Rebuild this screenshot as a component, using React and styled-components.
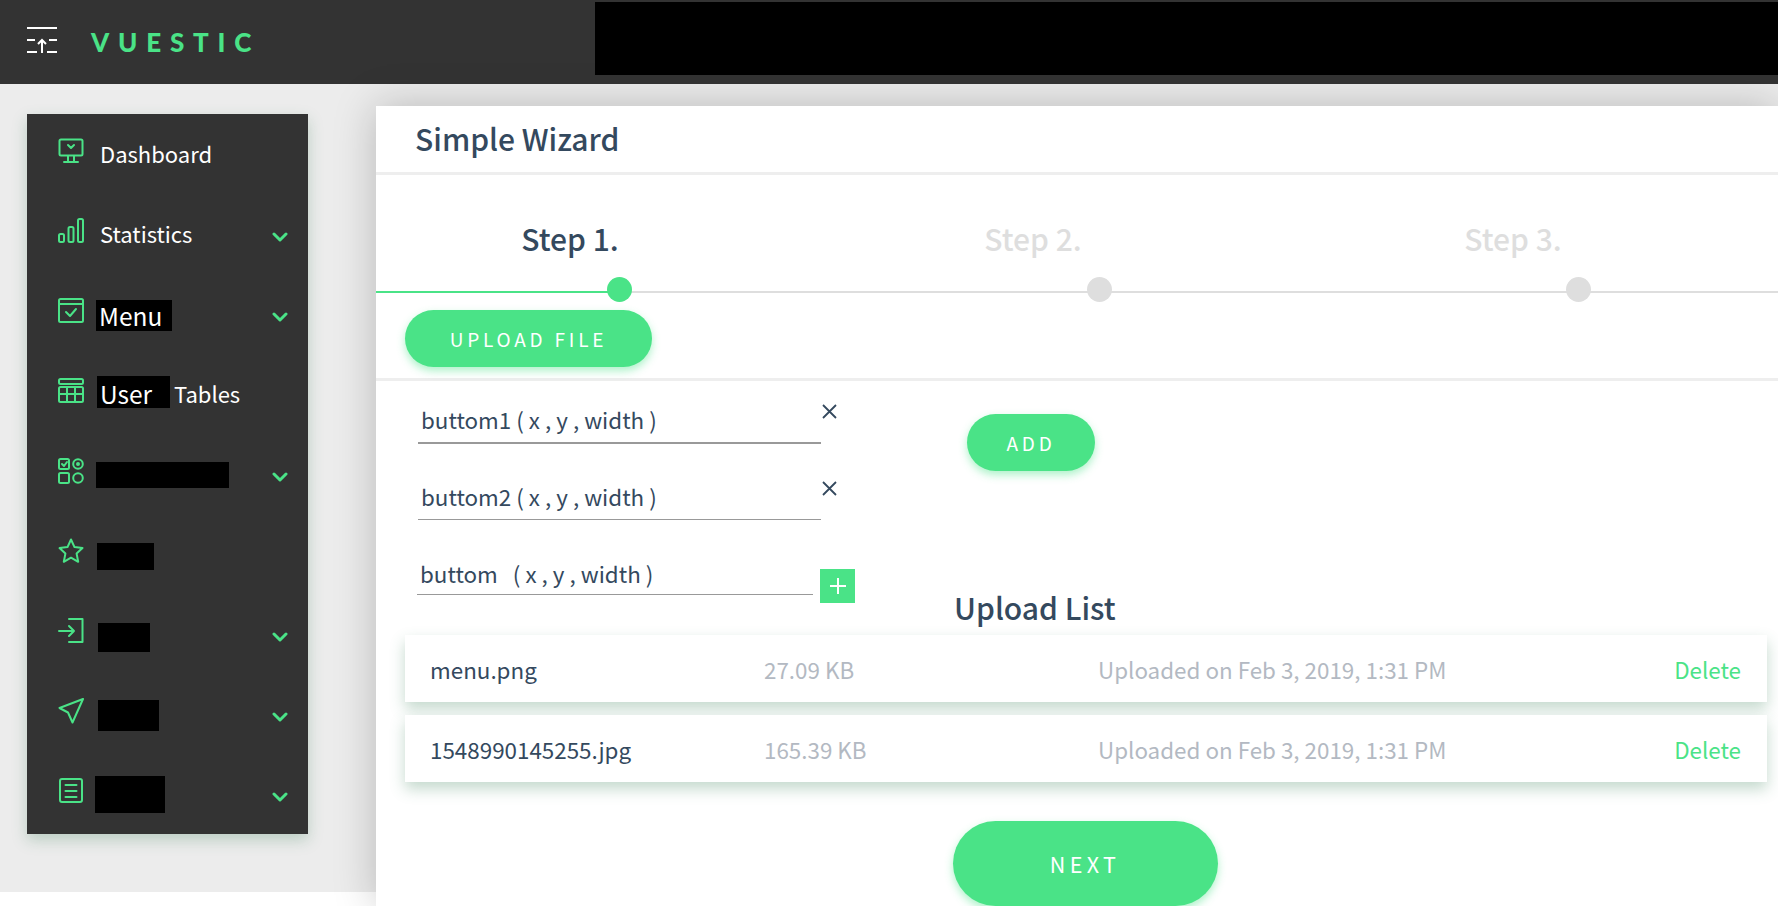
import React from 'react'
import styled, { createGlobalStyle } from 'styled-components'

const green = '#4ae387'
const ink = '#34495e'
const font = '"Noto Sans CJK SC", "Noto Sans", sans-serif'

const GlobalStyle = createGlobalStyle`
  html, body {
    margin: 0;
    padding: 0;
    background: #fff;
    font-family: ${font};
    overflow: hidden;
  }
  * {
    box-sizing: border-box;
  }
`

const Page = styled.div`
  width: 1778px;
  height: 906px;
  overflow: hidden;
  background: #fff;
`

const Header = styled.header`
  height: 84px;
  background: #333;
  display: flex;
  align-items: flex-start;
`

const Brand = styled.div`
  width: 595px;
  height: 84px;
  flex: none;
  padding: 27px 0 0 27px;
  display: flex;
  align-items: flex-start;
  gap: 34px;
`

const Logo = styled.span`
  font-family: "Lato", "Noto Sans", sans-serif;
  font-weight: 900;
  font-size: 26px;
  line-height: 30px;
  letter-spacing: 8.8px;
  color: ${green};
`

const Redaction = styled.div`
  flex: 1;
  height: 73px;
  margin-top: 2px;
  background: #000;
`

const Body = styled.div`
  display: flex;
  height: 808px;
  align-items: flex-start;
  background: #ececec;
`

const Sidebar = styled.nav`
  width: 281px;
  height: 720px;
  flex: none;
  margin: 30px 0 0 27px;
  background: #333;
  box-shadow: 0 6px 14px rgba(60, 130, 90, 0.28);
  padding: 0 20px 0 31px;
`

const NavItem = styled.div`
  height: 80px;
  display: flex;
  align-items: center;
  color: #fff;
  font-size: 22px;
`

const NavIcon = styled.span`
  width: 26px;
  height: 26px;
  flex: none;
  margin-top: -6px;
  display: flex;
`

const NavLabel = styled.span`
  margin-left: ${({ $ml = 16 }) => $ml}px;
  margin-top: -2px;
  line-height: 30px;
`

const Mask = styled.span`
  background: #000;
  color: #fff;
  display: inline-flex;
  align-items: ${({ $up }) => ($up ? 'flex-end' : 'center')};
  flex: none;
  width: ${({ $w }) => $w}px;
  height: ${({ $h }) => $h}px;
  margin-left: ${({ $ml }) => $ml}px;
  margin-top: ${({ $dy = 0 }) => $dy * 2}px;
  padding-left: 3px;
  font-size: 24.5px;
  line-height: 28px;
`

const Chevron = styled.span`
  margin-left: auto;
  margin-top: 6px;
  width: 16px;
  height: 12px;
  display: flex;
`

const Content = styled.main`
  flex: 1;
  margin: 22px 0 0 68px;
  height: 800px;
  background: #fff;
  box-shadow: 0 0 40px rgba(0, 0, 0, 0.22);
  color: ${ink};
`

const CardTitle = styled.div`
  height: 69px;
  border-bottom: 3px solid #eee;
  padding: 0 0 0 39px;
  font-size: 30px;
  font-weight: 500;
  line-height: 64px;
`

const Steps = styled.div`
  height: 117px;
  position: relative;
`

const StepTitle = styled.div`
  position: absolute;
  top: 40px;
  left: ${({ $x }) => $x}px;
  transform: translateX(-50%);
  font-size: 30px;
  font-weight: 500;
  line-height: 46px;
  color: ${({ $active }) => ($active ? ink : '#dedede')};
`

const Track = styled.div`
  position: absolute;
  left: 0;
  right: 0;
  top: 116px;
  height: 2px;
  background: linear-gradient(to right, ${green} 244px, #dedede 244px);
`

const Dot = styled.span`
  position: absolute;
  top: 102px;
  left: ${({ $x }) => $x}px;
  width: 25px;
  height: 25px;
  border-radius: 50%;
  background: ${({ $active }) => ($active ? green : '#dedede')};
`

const UploadRow = styled.div`
  height: 89px;
  padding: 18px 0 0 29px;
  border-bottom: 3px solid #eee;
`

const PillButton = styled.button`
  display: block;
  border: 0;
  padding: 0;
  width: ${({ $w }) => $w}px;
  height: ${({ $h }) => $h}px;
  border-radius: ${({ $h }) => $h / 2}px;
  background: ${green};
  color: #fff;
  font-family: ${font};
  font-size: ${({ $fs = 19 }) => $fs}px;
  letter-spacing: ${({ $ls = 3.8 }) => $ls}px;
  box-shadow: 0 4px 9px rgba(74, 227, 135, 0.45);
`

const Fields = styled.div`
  display: flex;
  height: 254px;
`

const FieldColumn = styled.div`
  width: 581px;
  flex: none;
  padding: 0 0 0 42px;
`

const FieldRow = styled.div`
  display: flex;
  align-items: flex-start;
  height: ${({ $h = 77 }) => $h}px;
`

const FieldText = styled.div`
  width: ${({ $w = 403 }) => $w}px;
  height: ${({ $h }) => $h}px;
  margin-left: ${({ $ml = 0 }) => $ml}px;
  border-bottom: ${({ $b = 1 }) => $b}px solid #999;
  font-size: 22.4px;
  line-height: 32px;
  padding: 22px 0 0 3px;
  white-space: pre;
`

const RemoveButton = styled.span`
  margin: 23px 0 0 1px;
  width: 15px;
  height: 15px;
  display: flex;
`

const AddField = styled.span`
  width: 35px;
  height: 34px;
  margin: 34px 0 0 7px;
  background: ${green};
  display: flex;
  align-items: center;
  justify-content: center;
`

const AddColumn = styled.div`
  padding: 33px 0 0 0;
  margin-left: 10px;
`

const ListTitle = styled.div`
  margin: 113px 0 0 -13px;
  font-size: 30px;
  font-weight: 500;
  line-height: 46px;
`

const UploadList = styled.div`
  margin: 0 11px 0 29px;
  display: grid;
  gap: 13px;
`

const FileRow = styled.div`
  height: 67px;
  background: #fff;
  box-shadow: 0 7px 14px rgba(60, 130, 90, 0.3);
  display: grid;
  grid-template-columns: 334px 334px 1fr auto;
  align-items: center;
  padding: 0 26px 0 25px;
  font-size: 22.4px;
  position: relative;
`

const Muted = styled.span`
  color: #b3b9c2;
`

const DeleteLink = styled.span`
  color: ${green};
`

const NextRow = styled.div`
  display: flex;
  justify-content: center;
  margin: 39px 0 0 0;
  padding-left: 16px;
`

const iconProps = {
  viewBox: '0 0 26 26',
  width: 26,
  height: 26,
  fill: 'none',
  stroke: green,
  strokeWidth: 2,
  strokeLinecap: 'round',
  strokeLinejoin: 'round',
}

const icons = {
  dashboard: (
    <svg {...iconProps}>
      <rect x="1.5" y="1.5" width="23" height="16" rx="1.5" />
      <path d="M10 7l3 3 3-3M10 18v5M16 18v5M6 24h14" />
    </svg>
  ),
  stats: (
    <svg {...iconProps}>
      <rect x="1" y="16" width="5" height="8" rx="1.5" />
      <rect x="10.5" y="9" width="5" height="15" rx="1.5" />
      <rect x="20" y="1" width="5" height="23" rx="1.5" />
    </svg>
  ),
  menu: (
    <svg {...iconProps}>
      <rect x="1" y="1" width="24" height="23" rx="1.5" />
      <path d="M1 6h24M8 14l4 4 6-7" />
    </svg>
  ),
  table: (
    <svg {...iconProps}>
      <rect x="1" y="1" width="24" height="5" rx="1.5" />
      <rect x="1" y="9" width="24" height="15" rx="1.5" />
      <path d="M1 16h24M9 9v15M17 9v15" />
    </svg>
  ),
  ui: (
    <svg {...iconProps}>
      <rect x="1" y="1" width="10" height="10" rx="1.5" />
      <rect x="1" y="15" width="10" height="10" rx="1.5" />
      <circle cx="20" cy="6" r="4.8" />
      <circle cx="20" cy="6" r="1" />
      <circle cx="20" cy="20" r="4.8" />
      <path d="M4 6l2 2 3-4" />
    </svg>
  ),
  star: (
    <svg {...iconProps}>
      <path d="M13 1.500l3.500 7.600 8 1-5.900 5.500 1.600 8.200-7.200-4.100-7.200 4.100 1.600-8.200L1.500 10.100l8-1z" />
    </svg>
  ),
  login: (
    <svg {...iconProps}>
      <path d="M11 1h13.500v23H11M1 13h15M11 8l5 5-5 5" />
    </svg>
  ),
  nav: (
    <svg {...iconProps}>
      <path d="M25 1L1.500 10l8.500 4.500 4.500 10z" />
    </svg>
  ),
  doc: (
    <svg {...iconProps}>
      <rect x="2" y="1" width="22" height="23" rx="2" />
      <path d="M7.500 7h11M7.500 13h11M7.500 19h11" />
    </svg>
  ),
}

const navItems = [
  { icon: 'dashboard', label: 'Dashboard' },
  { icon: 'stats', label: 'Statistics', more: true },
  { icon: 'menu', mask: { w: 76, h: 31, text: 'Menu', ml: 12, dy: 1.5 }, more: true },
  { icon: 'table', mask: { w: 73, h: 32, text: 'User', ml: 13, dy: -2, up: true }, after: 'Tables' },
  { icon: 'ui', mask: { w: 133, h: 26, ml: 12, dy: 1 }, more: true },
  { icon: 'star', mask: { w: 57, h: 27, ml: 13, dy: 2.5 } },
  { icon: 'login', mask: { w: 52, h: 29, ml: 14, dy: 3.5 }, more: true },
  { icon: 'nav', mask: { w: 61, h: 31, ml: 14, dy: 1.5 }, more: true },
  { icon: 'doc', mask: { w: 70, h: 37, ml: 11, dy: 0.5 }, more: true },
]

const files = [
  { name: 'menu.png', size: '27.09 KB' },
  { name: '1548990145255.jpg', size: '165.39 KB' },
]

const ChevronIcon = () => (
  <Chevron>
    <svg width="16" height="12" viewBox="0 0 16 12" fill="none" stroke={green} strokeWidth="3" strokeLinecap="round" strokeLinejoin="round">
      <path d="M2 3l6 6 6-6" />
    </svg>
  </Chevron>
)

const Cross = () => (
  <svg width="15" height="15" viewBox="0 0 15 15" fill="none" stroke={ink} strokeWidth="1.8">
    <path d="M1 1l13 13M14 1L1 14" />
  </svg>
)

export default function App() {
  return (
    <Page>
      <GlobalStyle />
      <Header>
        <Brand>
          <svg width="30" height="26" viewBox="0 0 30 26" fill="none" stroke="#fff" strokeWidth="2">
            <path d="M0 1h30M0 13h8M22 13h8M0 25h10M20 25h10M15 26V13M11 17l4-4 4 4" />
          </svg>
          <Logo>VUESTIC</Logo>
        </Brand>
        <Redaction />
      </Header>
      <Body>
        <Sidebar>
          {navItems.map(item => (
            <NavItem key={item.icon}>
              <NavIcon>{icons[item.icon]}</NavIcon>
              {item.label && <NavLabel>{item.label}</NavLabel>}
              {item.mask && (
                <Mask
                  $w={item.mask.w}
                  $h={item.mask.h}
                  $ml={item.mask.ml}
                  $dy={item.mask.dy}
                  $up={item.mask.up}
                >
                  {item.mask.text}
                </Mask>
              )}
              {item.after && <NavLabel $ml={4}>{item.after}</NavLabel>}
              {item.more && <ChevronIcon />}
            </NavItem>
          ))}
        </Sidebar>
        <Content>
          <CardTitle>Simple Wizard</CardTitle>
          <Steps>
            <StepTitle $x={194} $active>Step 1.</StepTitle>
            <StepTitle $x={657}>Step 2.</StepTitle>
            <StepTitle $x={1137}>Step 3.</StepTitle>
            <Track />
            <Dot $x={231} $active />
            <Dot $x={711} />
            <Dot $x={1190} />
          </Steps>
          <UploadRow>
            <PillButton $w={247} $h={57}>UPLOAD FILE</PillButton>
          </UploadRow>
          <Fields>
            <FieldColumn>
              <FieldRow>
                <FieldText $h={63} $b={2}>buttom1 ( x , y , width )</FieldText>
                <RemoveButton><Cross /></RemoveButton>
              </FieldRow>
              <FieldRow>
                <FieldText $h={62}>buttom2 ( x , y , width )</FieldText>
                <RemoveButton><Cross /></RemoveButton>
              </FieldRow>
              <FieldRow $h={70}>
                <FieldText $w={396} $ml={-1} $h={60}>buttom   ( x , y , width )</FieldText>
                <AddField>
                  <svg width="16" height="16" viewBox="0 0 16 16" stroke="#fff" strokeWidth="2">
                    <path d="M8 0v16M0 8h16" />
                  </svg>
                </AddField>
              </FieldRow>
            </FieldColumn>
            <AddColumn>
              <PillButton $w={128} $h={57} $fs={19}>ADD</PillButton>
              <ListTitle>Upload List</ListTitle>
            </AddColumn>
          </Fields>
          <UploadList>
            {files.map(file => (
              <FileRow key={file.name}>
                <span>{file.name}</span>
                <Muted>{file.size}</Muted>
                <Muted>Uploaded on Feb 3, 2019, 1:31 PM</Muted>
                <DeleteLink>Delete</DeleteLink>
              </FileRow>
            ))}
          </UploadList>
          <NextRow>
            <PillButton $w={265} $h={85} $fs={21.500} $ls={4.4}>NEXT</PillButton>
          </NextRow>
        </Content>
      </Body>
    </Page>
  )
}
